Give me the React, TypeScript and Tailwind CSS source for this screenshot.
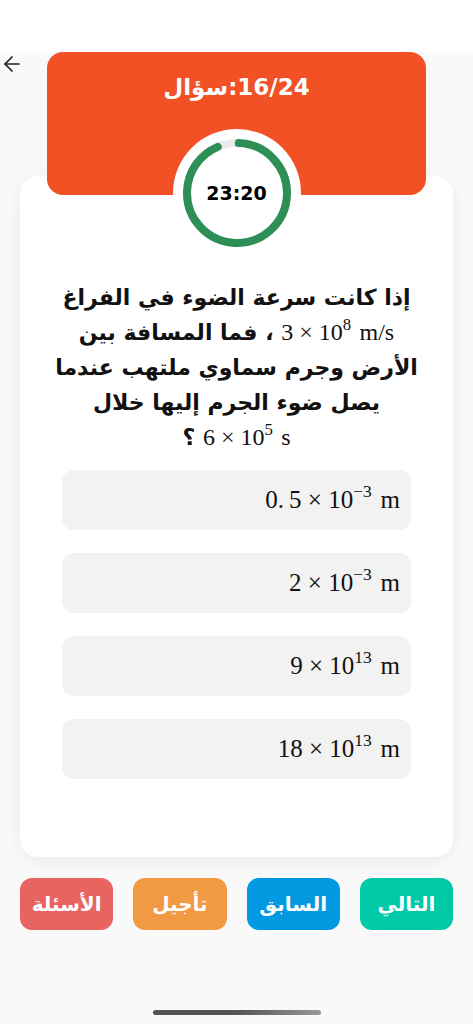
import { ArrowLeft } from "lucide-react";

const arabic = "font-['DejaVu_Sans','Noto_Sans',sans-serif]";
const serif = "font-['Liberation_Serif','DejaVu_Serif',serif]";

type Option = { base: string; exp: string; unit: string };

const options: Option[] = [
  { base: "0.\u20095 × 10", exp: "−3", unit: "m" },
  { base: "2 × 10", exp: "−3", unit: "m" },
  { base: "9 × 10", exp: "13", unit: "m" },
  { base: "18 × 10", exp: "13", unit: "m" },
];

function Sci({ base, exp, unit, size }: { base: string; exp: string; unit: string; size: string }) {
  return (
    <span dir="ltr" className={`${serif} ${size} font-normal whitespace-nowrap`}>
      {base}
      <sup className="text-[0.7em] -top-[0.62em]">{exp}</sup>
      <span className="ml-[0.35em]">{unit}</span>
    </span>
  );
}

function TimerRing() {
  const r = 50;
  const c = 2 * Math.PI * r;
  const progress = 0.93;
  return (
    <div className="absolute left-1/2 top-[77px] -translate-x-1/2 w-[128px] h-[128px] rounded-full bg-white flex items-center justify-center">
      <svg width="108" height="108" viewBox="0 0 108 108" className="absolute">
        <circle cx="54" cy="54" r={r} fill="none" stroke="#ebebeb" strokeWidth="8" />
        <circle
          cx="54"
          cy="54"
          r={r}
          fill="none"
          stroke="#2d8f56"
          strokeWidth="8"
          strokeLinecap="round"
          strokeDasharray={`${c * progress} ${c}`}
          transform="rotate(-88 54 54)"
        />
      </svg>
      <span className={`${arabic} relative text-[19px] font-bold text-black`}>23:20</span>
    </div>
  );
}

const actions = [
  { label: "التالي", color: "bg-[#00c9a7]" },
  { label: "السابق", color: "bg-[#0399e0]" },
  { label: "تأجيل", color: "bg-[#f29a43]" },
  { label: "الأسئلة", color: "bg-[#e86461]" },
];

export default function App() {
  return (
    <div className="min-h-screen bg-[#f9f9f9] flex flex-col">
      <div className="h-[52px] bg-white" />

      <div className="relative px-[20px]">
        <button className="absolute left-0 top-0 text-[#222]">
          <ArrowLeft size={24} strokeWidth={1.7} />
        </button>

        {/* Header */}
        <div className="relative z-10 mx-[27px] h-[143px] rounded-[16px] bg-[#f15125] pt-[22px] text-center">
          <div dir="ltr" className={`${arabic} text-[23px] font-bold text-white leading-[26px]`}>
            {"سؤال\u200E:16/24"}
          </div>
          <TimerRing />
        </div>

        {/* Question card */}
        <div className="-mt-[19px] rounded-[18px] bg-white shadow-[0_4px_18px_rgba(0,0,0,0.06)] pt-[104px] pb-[78px]">
          <p dir="rtl" className={`${arabic} px-[8px] text-center text-[22px] font-bold leading-[35px] text-[#111] whitespace-nowrap`}>
            إذا كانت سرعة الضوء في الفراغ
            <br />
            <Sci base="3 × 10" exp="8" unit="m/s" size="text-[24px]" /> ، فما المسافة بين
            <br />
            الأرض وجرم سماوي ملتهب عندما
            <br />
            يصل ضوء الجرم إليها خلال
            <br />
            <Sci base="6 × 10" exp="5" unit="s" size="text-[24px]" /> ؟
          </p>

          <div className="mt-[15px] mx-[42px] flex flex-col gap-[23px]">
            {options.map((o, i) => (
              <button
                key={i}
                className="h-[60px] rounded-[12px] bg-[#f2f2f2] flex items-center justify-end pr-[11px] text-[#111]"
              >
                <Sci base={o.base} exp={o.exp} unit={o.unit} size="text-[25px]" />
              </button>
            ))}
          </div>
        </div>

        {/* Bottom actions */}
        <div dir="rtl" className="mt-[21px] grid grid-cols-4 gap-[20px]">
          {actions.map((a) => (
            <button
              key={a.label}
              className={`${arabic} ${a.color} h-[52px] rounded-[12px] text-white text-[20px] font-bold`}
            >
              {a.label}
            </button>
          ))}
        </div>
      </div>

      <div className="mt-auto mb-[9px] flex justify-center">
        <div className="w-[168px] h-[5px] rounded-full bg-gradient-to-r from-[#555] via-[#555] to-[#999]" />
      </div>
    </div>
  );
}
